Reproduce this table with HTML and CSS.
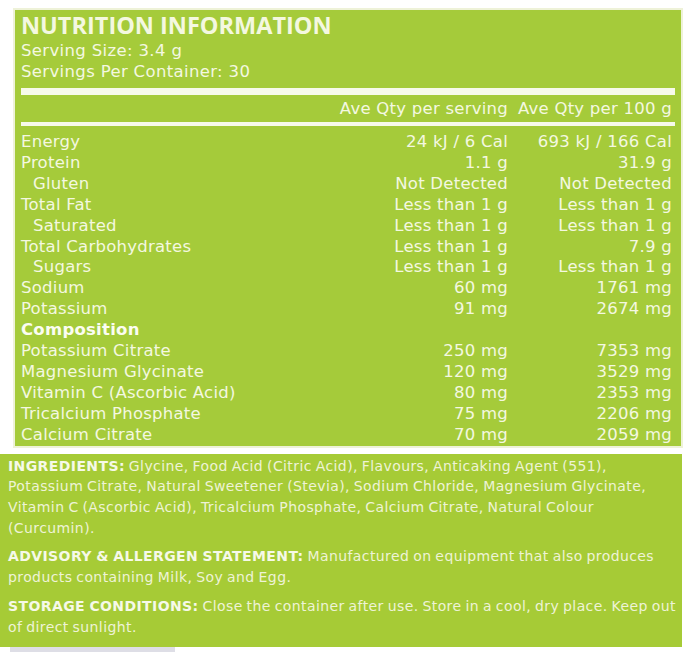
FILE: index.html
```html
<!DOCTYPE html>
<html lang="en">
<head>
<meta charset="utf-8">
<title>Nutrition Information</title>
<link rel="stylesheet" href="styles.css">
</head>
<body>
<div class="page">
  <section class="panel">
    <h1 class="title">NUTRITION INFORMATION</h1>
    <p class="meta">Serving Size: 3.4 g</p>
    <p class="meta">Servings Per Container: 30</p>
    <div class="rule rule-thick"></div>
    <div class="row head">
      <span></span><span class="num">Ave Qty per serving</span><span class="num last">Ave Qty per 100 g</span>
    </div>
    <div class="rule rule-thin"></div>
    <div class="rows">
      <div class="row"><span>Energy</span><span class="num">24 kJ / 6 Cal</span><span class="num last">693 kJ / 166 Cal</span></div>
      <div class="row"><span>Protein</span><span class="num">1.1 g</span><span class="num last">31.9 g</span></div>
      <div class="row sub"><span>Gluten</span><span class="num">Not Detected</span><span class="num last">Not Detected</span></div>
      <div class="row"><span>Total Fat</span><span class="num">Less than 1 g</span><span class="num last">Less than 1 g</span></div>
      <div class="row sub"><span>Saturated</span><span class="num">Less than 1 g</span><span class="num last">Less than 1 g</span></div>
      <div class="row"><span>Total Carbohydrates</span><span class="num">Less than 1 g</span><span class="num last">7.9 g</span></div>
      <div class="row sub"><span>Sugars</span><span class="num">Less than 1 g</span><span class="num last">Less than 1 g</span></div>
      <div class="row"><span>Sodium</span><span class="num">60 mg</span><span class="num last">1761 mg</span></div>
      <div class="row"><span>Potassium</span><span class="num">91 mg</span><span class="num last">2674 mg</span></div>
      <div class="row"><span class="strong">Composition</span><span></span><span></span></div>
      <div class="row"><span>Potassium Citrate</span><span class="num">250 mg</span><span class="num last">7353 mg</span></div>
      <div class="row"><span>Magnesium Glycinate</span><span class="num">120 mg</span><span class="num last">3529 mg</span></div>
      <div class="row"><span>Vitamin C (Ascorbic Acid)</span><span class="num">80 mg</span><span class="num last">2353 mg</span></div>
      <div class="row"><span>Tricalcium Phosphate</span><span class="num">75 mg</span><span class="num last">2206 mg</span></div>
      <div class="row"><span>Calcium Citrate</span><span class="num">70 mg</span><span class="num last">2059 mg</span></div>
    </div>
  </section>
  <section class="notes">
    <p class="note"><b>INGREDIENTS:</b> Glycine, Food Acid (Citric Acid), Flavours, Anticaking Agent (551),<br>Potassium Citrate, Natural Sweetener (Stevia), Sodium Chloride, Magnesium Glycinate,<br>Vitamin C (Ascorbic Acid), Tricalcium Phosphate, Calcium Citrate, Natural Colour<br>(Curcumin).</p>
    <p class="note"><b>ADVISORY &amp; ALLERGEN STATEMENT:</b> Manufactured on equipment that also produces<br>products containing Milk, Soy and Egg.</p>
    <p class="note"><b>STORAGE CONDITIONS:</b> Close the container after use. Store in a cool, dry place. Keep out<br>of direct sunlight.</p>
  </section>
  <div class="thumb"></div>
</div>
</body>
</html>
```
FILE: styles.css
```css
html, body {
  margin: 0;
  padding: 0;
  background: #ffffff;
}
.page {
  padding-top: 8px;
  font-family: "DejaVu Sans", "Open Sans", sans-serif;
  color: #f4f8e0;
}
.panel {
  box-sizing: border-box;
  margin-left: 13px;
  width: 670px;
  border: 2px solid #eef2d8;
  background: #a5cb3a;
  padding: 1px 6px 0 6px;
}
.title {
  margin: 0;
  font-family: "Open Sans", "DejaVu Sans", sans-serif;
  font-size: 23.5px;
  font-weight: 700;
  line-height: 29px;
}
.meta {
  margin: 0;
  font-size: 16.5px;
  line-height: 21px;
  letter-spacing: 0.35px;
}
.rule {
  background: #f7faea;
}
.rule-thick {
  height: 7px;
  margin-top: 6px;
}
.rule-thin {
  height: 4px;
  margin-top: 3px;
}
.row {
  display: grid;
  grid-template-columns: 1fr 170px 167px;
  font-size: 16.5px;
  line-height: 20.9px;
  letter-spacing: 0.25px;
  white-space: nowrap;
}
.head {
  margin-top: 3px;
  line-height: 21px;
}
.rows {
  margin-top: 6px;
}
.num {
  text-align: right;
}
.num.last {
  padding-right: 3px;
}
.sub span:first-child {
  padding-left: 12px;
}
.strong {
  font-weight: 700;
  color: #fbfdf2;
}
.notes {
  margin-top: 6px;
  width: 682px;
  background: #a6cb36;
  padding: 2px 0 10px 8px;
  box-sizing: border-box;
  color: #eef3d6;
}
.note {
  margin: 0 0 8px 0;
  font-size: 14px;
  line-height: 20.7px;
  letter-spacing: 0.4px;
  word-spacing: -0.9px;
  white-space: nowrap;
}
.note:last-child {
  margin-bottom: 0;
}
.note b {
  font-weight: 700;
  color: #f6f9e8;
}
.thumb {
  margin-left: 10px;
  width: 165px;
  height: 5px;
  background: #dedee6;
}
```
